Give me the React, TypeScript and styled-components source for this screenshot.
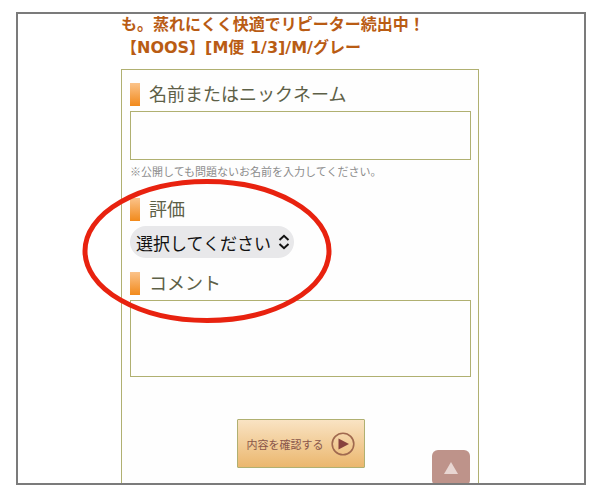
import React from "react";
import styled, { createGlobalStyle } from "styled-components";

const olive = "#b0b071";

const GlobalStyle = createGlobalStyle`
  *, *::before, *::after { box-sizing: border-box; }
  body {
    margin: 0;
    background: #fff;
    font-family: "Noto Sans CJK JP", sans-serif;
  }
  button, input, select, textarea { font-family: inherit; }
`;

const Frame = styled.main`
  display: flow-root;
  position: relative;
  margin: 12px 14px 15px 16px;
  padding: 0 105px 0 103px;
  border: 2px solid #7b7b7b;
  overflow: hidden;
`;

const Title = styled.h1`
  margin: -1px 0 10px;
  color: #b95c14;
  font-family: "DejaVu Sans", "Noto Sans CJK JP", sans-serif;
  font-size: 16px;
  line-height: 23px;
  font-weight: 600;
  white-space: nowrap;
`;

const Panel = styled.form`
  padding: 13px 7px 15px 8px;
  border: 1px solid ${olive};
  border-bottom: 0;
  background: #fefefe;
`;

const Field = styled.div<{ $gap: number }>`
  position: relative;
  display: flex;
  flex-direction: column;
  align-items: flex-start;
  margin-bottom: ${(p) => p.$gap}px;
`;

const Label = styled.label`
  display: flex;
  align-items: flex-start;
  gap: 9px;
  height: 23px;
  margin-bottom: 5px;
  color: #5d6047;
  font-size: 18px;
  line-height: 21px;

  &::before {
    content: "";
    width: 10px;
    height: 23px;
    background: linear-gradient(#fbc38a, #f28a1c);
  }
`;

const TextInput = styled.input`
  width: 100%;
  height: 49px;
  padding: 0 10px;
  border: 1px solid ${olive};
  border-radius: 0;
  background: #fefefe;
  font-size: 17px;
  outline: none;
`;

const TextArea = styled.textarea`
  display: block;
  width: 100%;
  height: 77px;
  padding: 8px 10px;
  border: 1px solid ${olive};
  background: #fefefe;
  font-size: 17px;
  resize: none;
  outline: none;
`;

const Note = styled.p`
  margin: 3px 0 2px;
  color: #8c8c8c;
  font-size: 11px;
  line-height: 16px;
`;

const SelectWrap = styled.div`
  display: grid;
  align-items: center;

  > * { grid-area: 1 / 1; }
  > svg {
    justify-self: end;
    margin-right: 4px;
    pointer-events: none;
  }
`;

const Select = styled.select`
  appearance: none;
  width: 164px;
  height: 32px;
  padding: 0 0 0 6px;
  border: 0;
  border-radius: 16px;
  background: #e8e8ea;
  color: #111;
  font-size: 17px;
`;

const Highlight = styled.svg`
  position: absolute;
  left: -49px;
  top: -19px;
  width: 251px;
  height: 144px;
  z-index: 1;
  pointer-events: none;
`;

const Submit = styled.button`
  display: flex;
  align-items: center;
  justify-content: center;
  gap: 7px;
  width: 128px;
  height: 49px;
  margin: 0 auto;
  padding: 0;
  border: 1px solid ${olive};
  border-radius: 1px;
  background: linear-gradient(#f9e3c3, #ebb76e);
  color: #8a564a;
  font-size: 11px;
`;

const ToTop = styled.button`
  position: absolute;
  right: 114px;
  bottom: -3px;
  display: flex;
  justify-content: center;
  width: 38px;
  height: 36px;
  padding: 12px 0 0;
  border: 0;
  border-radius: 6px;
  background: #be938a;
`;

export default function App() {
  return (
    <>
      <GlobalStyle />
      <Frame>
        <Title>
          も。蒸れにくく快適でリピーター続出中！
          <br />
          【NOOS】[M便 1/3]/M/グレー
        </Title>
        <Panel onSubmit={(e) => e.preventDefault()}>
          <Field $gap={17}>
            <Label htmlFor="nickname">名前またはニックネーム</Label>
            <TextInput id="nickname" type="text" />
            <Note>※公開しても問題ないお名前を入力してください。</Note>
          </Field>
          <Field $gap={14}>
            <Label htmlFor="rating">評価</Label>
            <SelectWrap>
              <Select id="rating" defaultValue="">
                <option value="">選択してください</option>
              </Select>
              <svg width="12" height="16" viewBox="0 0 12 16" fill="none" stroke="#111" strokeWidth="2" aria-hidden="true">
                <path d="M1.5 6 6 1.8 10.5 6M1.5 10 6 14.2 10.5 10" />
              </svg>
            </SelectWrap>
            <Highlight viewBox="0 0 251 144" aria-hidden="true">
              <ellipse cx="126" cy="72" rx="122" ry="69.5" fill="none" stroke="#e8220f" strokeWidth="5" />
            </Highlight>
          </Field>
          <Field $gap={42}>
            <Label htmlFor="comment">コメント</Label>
            <TextArea id="comment" />
          </Field>
          <Submit type="submit">
            内容を確認する
            <svg width="24" height="24" viewBox="0 0 24 24" aria-hidden="true">
              <circle cx="12" cy="12" r="10.8" fill="none" stroke="#a0694f" strokeWidth="1.6" />
              <path d="M7.5 6.5 18 12 7.5 17.5Z" fill="#87423e" />
            </svg>
          </Submit>
        </Panel>
        <ToTop type="button" aria-label="ページの先頭へ">
          <svg width="14" height="12" viewBox="0 0 14 12" aria-hidden="true">
            <path d="M7 0 14 12H0Z" fill="#e8d6d2" />
          </svg>
        </ToTop>
      </Frame>
    </>
  );
}
